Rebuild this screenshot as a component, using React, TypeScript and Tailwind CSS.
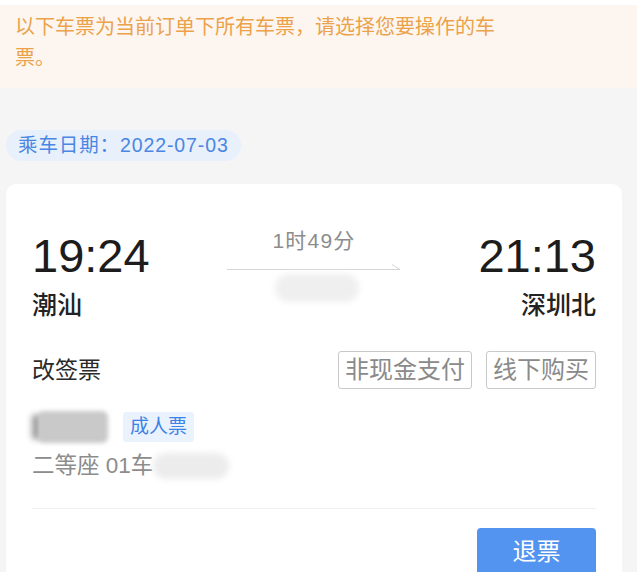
const cjk = "font-['Liberation_Sans','Noto_Sans_CJK_SC',sans-serif]";

function Smudge({ className }: { className: string }) {
  return <div aria-hidden className={`rounded-full blur-[3px] ${className}`} />;
}

function Station({ time, name, align }: { time: string; name: string; align: 'left' | 'right' }) {
  return (
    <div className={`flex flex-col ${align === 'right' ? 'items-end' : 'items-start'}`}>
      <div className="mt-[4px] text-[47px] leading-[47px] text-[#1c1c1c]">{time}</div>
      <div className="mt-[11px] text-[25px] leading-[30px] font-medium text-[#222]">{name}</div>
    </div>
  );
}

function TagButton({ label }: { label: string }) {
  return (
    <span className="rounded-[3px] border border-[#c9c9c9] px-[6px] text-[24px] leading-[36px] text-[#8a8a8a]">
      {label}
    </span>
  );
}

export default function App() {
  return (
    <div className={`min-h-[572px] bg-[#f5f5f5] ${cjk}`}>
      <div className="h-[5px] bg-white" />
      <div className="bg-[#fdf6f0] pt-[7px] pb-[14px] pl-[15px]">
        <p className="w-[490px] text-[20px] leading-[31px] text-[#eba24a]">
          以下车票为当前订单下所有车票，请选择您要操作的车票。
        </p>
      </div>

      <div className="ml-[6px] mt-[42px] inline-flex h-[31px] items-center rounded-full bg-[#e8f0fc] px-[12px] text-[19.5px] tracking-[0.9px] text-[#4a86e3]">
        乘车日期：2022-07-03
      </div>

      <div className="ml-[6px] mt-[23px] w-[616px] rounded-[10px] bg-white px-[26px] pt-[44px] pb-[8px]">
        <div className="flex items-start justify-between">
          <Station time="19:24" name="潮汕" align="left" />
          <div className="flex w-[174px] flex-col items-center">
            <div className="text-[21px] leading-[26px] tracking-[1.2px] text-[#8c8c8c]">1时49分</div>
            <svg width="174" height="10" viewBox="0 0 174 10" className="mt-[7px]">
              <line x1="0" y1="8.5" x2="173" y2="8.5" stroke="#d6d6d6" strokeWidth="1" />
              <line x1="165" y1="3.5" x2="173" y2="8.5" stroke="#d6d6d6" strokeWidth="1" />
            </svg>
            <Smudge className="mt-[3px] ml-[6px] h-[28px] w-[84px] bg-[#efefef]" />
          </div>
          <Station time="21:13" name="深圳北" align="right" />
        </div>

        <div className="mt-[31px] flex items-center justify-between">
          <span className="text-[23px] leading-[30px] text-[#2a2a2a]">改签票</span>
          <div className="flex gap-[14px]">
            <TagButton label="非现金支付" />
            <TagButton label="线下购买" />
          </div>
        </div>

        <div className="mt-[22px] flex items-center gap-[15px]">
          <div className="relative h-[32px] w-[76px]">
            <div className="absolute inset-y-[4px] left-0 w-[10px] bg-[#9a9a9a] blur-[3px]" />
            <div className="absolute inset-y-0 left-[6px] right-0 rounded-[6px] bg-[#c9c9c9] blur-[2px]" />
          </div>
          <span className="rounded-[3px] bg-[#eaf2fe] px-[7px] text-[19px] leading-[30px] text-[#3d82e6]">成人票</span>
        </div>

        <div className="mt-[8px] flex items-center">
          <span className="text-[22.5px] leading-[30px] text-[#8c8c8c]">二等座 01车</span>
          <Smudge className="h-[26px] w-[76px] bg-[#ececec]" />
        </div>

        <div className="mt-[27px] h-px bg-[#f0f0f0]" />

        <div className="mt-[19px] flex justify-end">
          <button className="h-[48px] w-[119px] rounded-[4px] bg-[#5294ef] text-[24px] text-white">退票</button>
        </div>
      </div>
    </div>
  );
}
